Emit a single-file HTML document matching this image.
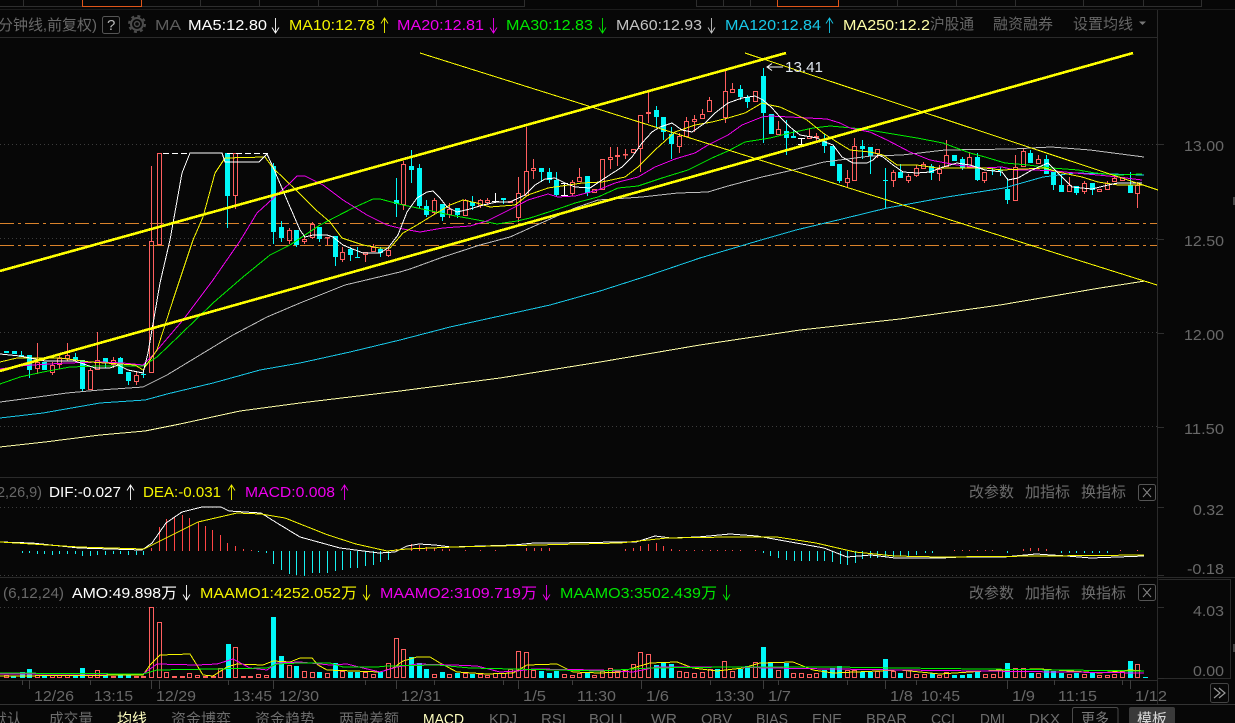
<!DOCTYPE html>
<html><head><meta charset="utf-8"><style>
html,body{margin:0;padding:0;background:#070707;width:1235px;height:723px;overflow:hidden}
svg{display:block}
text{font-family:"Liberation Sans","Noto Sans CJK SC",sans-serif;font-size:15px}
.g{fill:#686868}
.ln{fill:none;stroke-width:1}
polyline{shape-rendering:crispEdges}
</style></head><body>
<svg width="1235" height="723" viewBox="0 0 1235 723" xmlns="http://www.w3.org/2000/svg">
<rect width="1235" height="723" fill="#070707"/>
<!-- top tabs -->
<g fill="none" stroke="#2e2e2e" shape-rendering="crispEdges">
<path d="M0 6.5H524.5V0M23.5 0V6M82.5 0V6M141.5 0V6M200.5 0V6M259.5 0V6M318.5 0V6M377.5 0V6M436.5 0V6"/>
<path d="M696.5 0V6.5H1201.5V0M723.5 0V6M750.5 0V6M897.5 0V6M956.5 0V6M1015.5 0V6M1083.5 0V6M1143.5 0V6"/>
<path d="M0 9.5H1235" stroke="#1c1c1c"/>
<path d="M0 37.5H1157" stroke="#2a2a2a"/>
<path d="M1157.5 10V704" stroke="#2a2a2a"/>
<path d="M0 477.5H1157M0 577.5H1235M0 680.5H1157" stroke="#2a2a2a"/>
<path d="M0 704.5H1235" stroke="#333"/>
<path d="M1158.5 579.5H1230.5V678.5H1158.5" stroke="#2a2a2a"/>
</g>
<rect x="1233" y="197" width="2" height="8" fill="#444"/>
<rect x="1233" y="644" width="2" height="8" fill="#444"/>
<path d="M82.5 0V6.5H141.5V0M777.5 0V6.5H838.5V0" fill="none" stroke="#e0561a" shape-rendering="crispEdges"/>
<!-- grid -->
<g fill="none" stroke="#3c3c3c" stroke-dasharray="1 3" shape-rendering="crispEdges">
<path d="M0 144.5H1157M0 238.5H1157M0 332.5H1157M0 426.5H1157M0 507.5H1145M0 575.5H1145M0 607.5H1145"/>
</g>
<path d="M0 223.5H1157M0 245.5H1157" fill="none" stroke="#d9822b" stroke-dasharray="14 4 3 4" shape-rendering="crispEdges"/>
<!-- candles: red hollow -->
<g fill="none" stroke="#ff5f5f" shape-rendering="crispEdges">
<path d="M35.5 362.5h4V368.5h-4zM50.5 365.5h4V372.5h-4zM57.5 358.5h4V364.5h-4zM65.5 355.5h4V358.5h-4zM88.5 370.5h4V389.5h-4zM95.5 360.5h4V369.5h-4zM111.5 360.5h4V364.5h-4zM134.5 375.5h4V381.5h-4zM149.5 241.5h4V372.5h-4zM157.5 153.5h4V244.5h-4zM233.5 153.5h4V195.5h-4zM287.5 230.5h4V240.5h-4zM302.5 239.5h4V241.5h-4zM310.5 224.5h4V237.5h-4zM325.5 237.5h4V238h-4zM340.5 252.5h4V259.5h-4zM363.5 252.5h4V254.5h-4zM371.5 247.5h4V251.5h-4zM386.5 250.5h4V255.5h-4zM401.5 164.5h4V204.5h-4zM432.5 200.5h4V212.5h-4zM447.5 209.5h4V214.5h-4zM463.5 200.5h4V215.5h-4zM478.5 200.5h4V205.5h-4zM485.5 200.5h4V202.5h-4zM508.5 201.5h4V202.5h-4zM516.5 193.5h4V217.5h-4zM524.5 171.5h4V195.5h-4zM531.5 168.5h4V170.5h-4zM570.5 182.5h4V193.5h-4zM577.5 177.5h4V181.5h-4zM592.5 189.5h4V192.5h-4zM600.5 159.5h4V189.5h-4zM608.5 157.5h4V159.5h-4zM615.5 155.5h4V156.5h-4zM623.5 154.5h4V155h-4zM631.5 149.5h4V152.5h-4zM638.5 115.5h4V148.5h-4zM646.5 112.5h4V113.5h-4zM677.5 136.5h4V146.5h-4zM684.5 121.5h4V136.5h-4zM692.5 119.5h4V121.5h-4zM700.5 114.5h4V118.5h-4zM707.5 100.5h4V111.5h-4zM723.5 91.5h4V117.5h-4zM730.5 89.5h4V92.5h-4zM753.5 91.5h4V101.5h-4zM776.5 129.5h4V134.5h-4zM807.5 136.5h4V138.5h-4zM814.5 136.5h4V137.5h-4zM845.5 178.5h4V182.5h-4zM852.5 146.5h4V180.5h-4zM875.5 149.5h4V153.5h-4zM891.5 172.5h4V180.5h-4zM906.5 176.5h4V180.5h-4zM914.5 168.5h4V175.5h-4zM921.5 164.5h4V168.5h-4zM937.5 169.5h4V173.5h-4zM944.5 155.5h4V166.5h-4zM967.5 157.5h4V167.5h-4zM982.5 172.5h4V180.5h-4zM1013.5 167.5h4V200.5h-4zM1021.5 151.5h4V166.5h-4zM1036.5 159.5h4V163.5h-4zM1067.5 185.5h4V191.5h-4zM1082.5 183.5h4V191.5h-4zM1097.5 189.5h4V191.5h-4zM1105.5 183.5h4V189.5h-4zM1112.5 178.5h4V181.5h-4zM1120.5 177.5h4V180.5h-4zM1135.5 185.5h4V193.5h-4z"/>
<path d="M37.5 343V362M37.5 369V374M52.5 362V365M52.5 373V375M59.5 353V358M59.5 365V369M67.5 343V355M67.5 359V361M90.5 368V370M97.5 332V360M113.5 357V360M113.5 365V368M136.5 372V375M136.5 382V385M151.5 166V241M235.5 196V209M289.5 228V230M289.5 241V244M304.5 237V239M304.5 242V244M312.5 222V224M312.5 238V239M327.5 238V245M342.5 247V252M342.5 260V262M365.5 255V262M373.5 244V247M388.5 248V250M388.5 256V257M403.5 161V164M403.5 205V210M434.5 198V200M434.5 213V215M449.5 203V209M449.5 215V218M465.5 199V200M480.5 199V200M480.5 206V208M487.5 198V200M487.5 203V205M518.5 177V193M518.5 218V222M526.5 127V171M533.5 159V168M533.5 171V179M572.5 180V182M572.5 194V196M579.5 168V177M610.5 147V157M610.5 160V169M617.5 147V155M617.5 157V166M625.5 149V159M640.5 149V172M648.5 92V112M648.5 114V123M679.5 133V136M679.5 147V153M686.5 117V121M694.5 115V119M694.5 122V132M702.5 109V114M709.5 97V100M725.5 70V91M725.5 118V123M732.5 83V89M778.5 121V129M809.5 128V136M816.5 133V136M816.5 138V142M847.5 170V178M847.5 183V188M854.5 138V146M877.5 154V158M893.5 170V172M893.5 181V187M908.5 174V176M908.5 181V183M916.5 165V168M916.5 176V177M923.5 162V164M939.5 165V169M939.5 174V181M946.5 140V155M969.5 152V157M984.5 181V183M1015.5 155V167M1023.5 149V151M1038.5 155V159M1069.5 177V185M1084.5 181V183M1084.5 192V194M1107.5 181V183M1114.5 176V178M1137.5 182V185M1137.5 194V208"/>
</g>
<!-- candles: cyan -->
<g shape-rendering="crispEdges">
<path fill="#00f8f8" d="M4 351h5v2h-5zM12 351h5v3h-5zM19 355h5v2h-5zM27 355h5v15h-5zM42 362h5v8h-5zM73 357h5v3h-5zM80 360h5v29h-5zM103 358h5v4h-5zM118 358h5v16h-5zM126 372h5v9h-5zM141 374h5v1h-5zM225 153h5v43h-5zM271 166h5v66h-5zM279 227h5v11h-5zM294 230h5v15h-5zM317 227h5v12h-5zM333 236h5v21h-5zM348 249h5v6h-5zM355 257h5v1h-5zM378 249h5v4h-5zM394 200h5v4h-5zM409 166h5v4h-5zM417 168h5v38h-5zM424 206h5v9h-5zM440 204h5v13h-5zM455 208h5v7h-5zM470 202h5v4h-5zM501 198h5v2h-5zM539 168h5v4h-5zM547 172h5v8h-5zM554 180h5v15h-5zM585 176h5v17h-5zM654 110h5v7h-5zM661 117h5v15h-5zM669 134h5v10h-5zM738 89h5v8h-5zM745 97h5v5h-5zM761 76h5v37h-5zM769 114h5v20h-5zM784 131h5v7h-5zM791 136h5v2h-5zM822 141h5v5h-5zM830 146h5v20h-5zM837 164h5v17h-5zM860 146h5v3h-5zM868 147h5v9h-5zM883 180h5v1h-5zM898 172h5v6h-5zM929 166h5v7h-5zM952 155h5v6h-5zM960 159h5v9h-5zM975 157h5v23h-5zM990 170h5v1h-5zM998 170h5v1h-5zM1005 189h5v11h-5zM1028 153h5v10h-5zM1044 159h5v15h-5zM1051 172h5v13h-5zM1059 185h5v7h-5zM1074 186h5v7h-5zM1090 183h5v7h-5zM1128 185h5v8h-5z"/>
<path fill="none" stroke="#00f8f8" d="M21.5 351V357M29.5 370V378M75.5 353V357M82.5 389V392M105.5 362V368M120.5 357V358M128.5 381V385M143.5 371V378M227.5 196V228M273.5 163V244M281.5 221V242M296.5 245V247M319.5 239V242M335.5 257V266M350.5 247V261M357.5 247V258M380.5 247V257M396.5 178V217M411.5 150V183M419.5 164V208M426.5 200V217M442.5 217V221M457.5 215V218M472.5 196V210M503.5 200V204M541.5 172V182M549.5 168V183M556.5 172V196M587.5 193V196M656.5 106V128M663.5 132V140M671.5 127V159M740.5 85V100M747.5 95V108M763.5 68V143M786.5 120V155M793.5 130V136M824.5 134V153M839.5 181V183M862.5 140V159M870.5 156V174M885.5 168V208M900.5 164V172M931.5 164V180M962.5 157V170M977.5 153V181M992.5 167V175M1000.5 167V176M1007.5 178V204M1030.5 150V153M1046.5 155V159M1053.5 185V190M1061.5 175V185M1076.5 193V195M1092.5 190V195M1130.5 172V185"/>
<path fill="none" stroke="#fff" d="M495.5 193V202M492 201.5H499M564.5 183V196M561 183.5H568M561 195.5H568M801.5 138V145M798 138.5H805M798 144.5H805"/>
<path fill="none" stroke="#fff" stroke-dasharray="6 3" d="M163 153.5H190M227 153.5H268"/>
</g>
<!-- moving averages -->
<g class="ln">
<polyline stroke="#bdbdbd" fill="none" points="0,402 23,399 67,393 100,390 143,387 167,375 200,355 233,335 267,317 300,303 345,285 400,272 410,269 443,257 480,245 510,237 530,228 575,208 598,200 642,197 678,193 708,192 728,186 762,177 793,170 824,162 871,156 902,155 945,150 1012,149 1051,147 1090,150 1144,157"/>
<polyline stroke="#18c8e8" fill="none" points="0,418 43,413 100,403 145,400 167,394 213,383 260,370 300,363 350,352 400,340 450,327 500,316 550,305 600,291 650,275 700,258 761,240 796,230 842,219 887,208 947,197 1004,188 1043,177 1075,173 1144,175"/>
<polyline stroke="#ffffa8" fill="none" points="0,447 45,442 100,435 145,431 180,424 240,411 300,403 400,391 500,378 600,362 700,345 800,330 900,319 1000,305 1100,288 1145,281"/>
<polyline stroke="#00ee00" fill="none" points="0,384 20,377 43,372 70,367 100,366 143,366 157,357 180,335 213,303 243,277 270,255 290,245 320,225 353,208 373,199 380,199 403,205 427,210 450,215 467,218 483,221 497,224 517,221 530,218 558,209 575,203 598,197 618,188 638,186 662,178 688,170 712,158 728,151 745,142 770,138 790,133 813,128 830,126 863,129 887,133 917,138 943,143 970,153 985,157 1005,163 1028,165 1052,168 1078,170 1095,173 1118,175 1142,174"/>
<polyline stroke="#ee00ee" fill="none" points="0,369 20,366 33,365 67,363 100,362 123,363 143,365 153,355 183,320 213,280 240,241 257,213 290,183 297,176 305,176 323,185 343,200 367,215 387,225 403,229 420,232 443,228 470,226 487,221 503,213 515,207 528,200 548,194 558,197 575,196 598,190 615,183 638,177 655,167 675,159 695,153 708,145 728,135 742,125 762,117 770,116 790,117 827,119 840,123 850,128 870,132 887,140 910,152 930,160 957,165 983,168 1002,167 1015,170 1035,170 1055,171 1075,173 1098,175 1118,177 1142,180"/>
<polyline stroke="#f5f500" fill="none" points="0,362 17,358 60,358 90,362 135,365 143,370 157,350 173,300 193,240 203,217 215,173 225,158 265,157 273,168 296,190 316,210 330,222 342,238 363,245 380,248 390,248 403,233 417,225 430,217 450,205 463,200 477,203 490,207 515,205 528,195 548,188 582,183 602,182 625,177 638,167 655,150 675,132 695,125 712,122 728,118 745,113 762,103 770,105 780,107 793,113 807,120 823,133 837,142 850,150 870,152 883,155 897,165 917,165 937,168 957,168 985,168 1002,170 1045,168 1058,172 1082,177 1098,182 1118,185 1142,185"/>
<polyline stroke="#ffffff" fill="none" points="0,354 20,356 30,358 45,361 60,361 75,361 95,368 110,368 118,365 128,370 143,373 148,353 160,283 170,240 182,173 190,153 222,153 225,162 259,162 267,154 273,167 287,200 300,230 305,237 313,235 327,235 333,237 343,245 350,248 363,253 380,253 388,248 398,235 407,212 417,198 427,192 433,191 440,198 447,207 457,212 470,209 483,205 497,202 510,202 525,195 535,185 545,179 555,178 565,183 575,187 590,188 605,178 622,167 632,157 642,143 652,132 660,127 672,123 682,130 692,132 705,123 715,113 728,103 742,98 755,96 763,100 772,108 780,117 790,127 800,135 817,138 825,142 833,145 842,157 853,163 867,163 873,160 878,155 883,157 893,165 903,172 917,173 930,172 943,167 957,163 970,165 985,170 1002,172 1008,180 1018,178 1032,170 1048,163 1058,173 1072,187 1092,189 1108,185 1118,183 1142,183"/>
<path stroke="#ffff00" fill="none" shape-rendering="crispEdges" d="M420 53L1157 285M745 53L1158 190"/>
<path stroke="#ffff00" stroke-width="2.6" fill="none" shape-rendering="crispEdges" d="M0 271L786 53M0 371L1133 53"/>
</g>
<path d="M783 67H767M772 63.5L767 67L772 70.5" fill="none" stroke="#fff"/>
<text x="785" y="72" textLength="38" lengthAdjust="spacingAndGlyphs" fill="#dfe6ee">13.41</text>
<!-- MACD -->
<g fill="none" shape-rendering="crispEdges">
<path stroke="#ff4545" d="M151.5 548V551M159.5 527V551M166.5 519V551M174.5 517V551M182.5 515V551M189.5 518V551M198.5 522V551M205.5 526V551M212.5 530V551M220.5 535V551M227.5 543V551M235.5 546V551M243.5 549V551M251.5 550V551M396.5 549V551M411.5 544V551M419.5 545V551M426.5 547V551M434.5 548V551M442.5 549V551M449.5 549V551M465.5 550V551M480.5 550V551M495.5 550V551M526.5 548V551M534.5 548V551M541.5 548V551M549.5 548V551M625.5 549V551M633.5 548V551M640.5 546V551M648.5 544V551M656.5 543V551M663.5 546V551M671.5 549V551M679.5 550V551M686.5 550V551M694.5 550V551M702.5 550V551M710.5 550V551M717.5 550V551M725.5 550V551M732.5 550V551M740.5 550V551M755.5 550V551M954.5 550V551M962.5 550V551M969.5 550V551M977.5 550V551M985.5 550V551M992.5 550V551M1023.5 549V551M1030.5 548V551M1038.5 548V551M1046.5 549V551M1120.5 550V551M1137.5 550V551"/>
<path stroke="#18f0f0" d="M22.5 551V553M29.5 551V553M37.5 551V554M44.5 551V554M52.5 551V555M59.5 551V554M67.5 551V554M75.5 551V554M82.5 551V556M90.5 551V556M97.5 551V555M105.5 551V555M113.5 551V554M120.5 551V554M128.5 551V555M136.5 551V555M143.5 551V555M258.5 551V552M266.5 551V553M273.5 551V564M281.5 551V570M289.5 551V574M296.5 551V575M304.5 551V576M312.5 551V573M319.5 551V573M327.5 551V573M335.5 551V571M342.5 551V570M350.5 551V568M357.5 551V568M365.5 551V566M373.5 551V565M380.5 551V562M388.5 551V560M763.5 551V553M770.5 551V556M778.5 551V558M786.5 551V560M794.5 551V561M801.5 551V561M809.5 551V561M817.5 551V561M824.5 551V561M832.5 551V562M840.5 551V564M847.5 551V565M855.5 551V563M862.5 551V559M870.5 551V558M877.5 551V558M885.5 551V557M893.5 551V557M900.5 551V556M908.5 551V556M916.5 551V555M925.5 551V553M932.5 551V553M1007.5 551V553M1061.5 551V553M1069.5 551V553M1076.5 551V553M1084.5 551V553M1092.5 551V553M1099.5 551V553M1107.5 551V553"/>
</g>
<polyline fill="none" stroke="#ffffff" points="0,542 32,543 79,548 142,550 152,543 166,523 182,512 202,507 221,507 229,511 261,513 277,523 300,537 340,548 379,553 395,552 407,546 419,544 435,545 451,547 514,545 534,543 553,543 620,542 636,542 655,536 671,538 698,537 730,534 757,536 785,541 824,548 847,557 871,555 895,558 941,558 961,557 1004,557 1036,554 1067,556 1091,558 1144,556"/>
<polyline fill="none" stroke="#f5f500" points="0,542 79,547 144,549 166,538 198,522 237,513 261,514 285,518 328,535 356,544 387,551 407,549 455,547 620,543 667,538 730,537 777,537 816,543 855,552 895,556 941,557 1144,555"/>
<!-- Volume -->
<g shape-rendering="crispEdges">
<path fill="#00f8f8" d="M11 676h5V678h-5zM20 672h5V678h-5zM27 669h5V678h-5zM42 675h5V678h-5zM73 675h5V678h-5zM80 668h5V678h-5zM103 675h5V678h-5zM118 674h5V678h-5zM126 675h5V678h-5zM226 644h5V678h-5zM271 617h5V678h-5zM279 656h5V678h-5zM294 666h5V678h-5zM317 672h5V678h-5zM333 663h5V678h-5zM348 672h5V678h-5zM355 672h5V678h-5zM378 672h5V678h-5zM409 657h5V678h-5zM417 663h5V678h-5zM424 669h5V678h-5zM440 672h5V678h-5zM455 673h5V678h-5zM470 674h5V678h-5zM539 671h5V678h-5zM547 673h5V678h-5zM554 671h5V678h-5zM585 672h5V678h-5zM654 665h5V678h-5zM661 663h5V678h-5zM669 664h5V678h-5zM715 669h5V678h-5zM738 669h5V678h-5zM745 666h5V678h-5zM761 647h5V678h-5zM768 663h5V678h-5zM784 663h5V678h-5zM822 670h5V678h-5zM830 668h5V678h-5zM837 666h5V678h-5zM860 672h5V678h-5zM868 672h5V678h-5zM883 659h5V678h-5zM898 673h5V678h-5zM930 673h5V678h-5zM952 675h5V678h-5zM960 675h5V678h-5zM967 674h5V678h-5zM975 672h5V678h-5zM1005 663h5V678h-5zM1029 673h5V678h-5zM1044 670h5V678h-5zM1051 671h5V678h-5zM1059 673h5V678h-5zM1074 673h5V678h-5zM1090 673h5V678h-5zM1128 661h5V678h-5zM1143 677h5V678h-5z"/>
<path fill="none" stroke="#ff5f5f" d="M4.5 675.5h4V677.5h-4zM35.5 675.5h4V677.5h-4zM50.5 675.5h4V677.5h-4zM57.5 675.5h4V677.5h-4zM65.5 675.5h4V677.5h-4zM88.5 675.5h4V677.5h-4zM95.5 670.5h4V677.5h-4zM111.5 676.5h4V677.5h-4zM134.5 676.5h4V677.5h-4zM141.5 676.5h4V677.5h-4zM149.5 607.5h4V677.5h-4zM157.5 622.5h4V677.5h-4zM164.5 672.5h4V677.5h-4zM172.5 676.5h4V677.5h-4zM180.5 676.5h4V677.5h-4zM187.5 673.5h4V677.5h-4zM195.5 675.5h4V677.5h-4zM203.5 676.5h4V677.5h-4zM211.5 676.5h4V677.5h-4zM218.5 668.5h4V677.5h-4zM233.5 647.5h4V677.5h-4zM241.5 676.5h4V677.5h-4zM248.5 676.5h4V677.5h-4zM256.5 674.5h4V677.5h-4zM264.5 675.5h4V677.5h-4zM287.5 665.5h4V677.5h-4zM302.5 671.5h4V677.5h-4zM310.5 672.5h4V677.5h-4zM325.5 673.5h4V677.5h-4zM340.5 671.5h4V677.5h-4zM363.5 672.5h4V677.5h-4zM371.5 674.5h4V677.5h-4zM386.5 663.5h4V677.5h-4zM394.5 638.5h4V677.5h-4zM401.5 649.5h4V677.5h-4zM432.5 674.5h4V677.5h-4zM447.5 674.5h4V677.5h-4zM463.5 673.5h4V677.5h-4zM478.5 674.5h4V677.5h-4zM485.5 675.5h4V677.5h-4zM493.5 673.5h4V677.5h-4zM501.5 673.5h4V677.5h-4zM508.5 669.5h4V677.5h-4zM516.5 651.5h4V677.5h-4zM524.5 652.5h4V677.5h-4zM531.5 670.5h4V677.5h-4zM562.5 674.5h4V677.5h-4zM570.5 675.5h4V677.5h-4zM577.5 673.5h4V677.5h-4zM592.5 675.5h4V677.5h-4zM600.5 671.5h4V677.5h-4zM608.5 668.5h4V677.5h-4zM615.5 672.5h4V677.5h-4zM623.5 669.5h4V677.5h-4zM631.5 664.5h4V677.5h-4zM638.5 652.5h4V677.5h-4zM646.5 654.5h4V677.5h-4zM677.5 671.5h4V677.5h-4zM684.5 672.5h4V677.5h-4zM692.5 673.5h4V677.5h-4zM700.5 672.5h4V677.5h-4zM708.5 669.5h4V677.5h-4zM722.5 661.5h4V677.5h-4zM730.5 671.5h4V677.5h-4zM753.5 662.5h4V677.5h-4zM776.5 670.5h4V677.5h-4zM791.5 673.5h4V677.5h-4zM799.5 673.5h4V677.5h-4zM807.5 674.5h4V677.5h-4zM814.5 673.5h4V677.5h-4zM845.5 670.5h4V677.5h-4zM852.5 670.5h4V677.5h-4zM875.5 671.5h4V677.5h-4zM891.5 671.5h4V677.5h-4zM906.5 670.5h4V677.5h-4zM914.5 674.5h4V677.5h-4zM922.5 674.5h4V677.5h-4zM937.5 675.5h4V677.5h-4zM944.5 672.5h4V677.5h-4zM983.5 674.5h4V677.5h-4zM991.5 674.5h4V677.5h-4zM998.5 669.5h4V677.5h-4zM1013.5 668.5h4V677.5h-4zM1021.5 668.5h4V677.5h-4zM1036.5 673.5h4V677.5h-4zM1067.5 674.5h4V677.5h-4zM1082.5 674.5h4V677.5h-4zM1097.5 675.5h4V677.5h-4zM1105.5 675.5h4V677.5h-4zM1112.5 674.5h4V677.5h-4zM1120.5 671.5h4V677.5h-4zM1135.5 664.5h4V677.5h-4z"/>
</g>
<polyline fill="none" stroke="#f5f500" points="0,676 143,675 150,665 160,655 190,654 203,675 213,676 227,667 237,664 263,665 273,661 290,662 300,658 312,658 318,665 327,670 380,672 393,668 403,661 417,657 430,657 440,663 457,672 487,674 513,673 527,665 557,664 573,672 600,673 620,672 633,668 650,663 677,662 693,668 717,671 743,668 760,663 793,662 813,670 833,673 900,670 940,674 1000,670 1040,669 1100,673 1130,670 1144,671"/>
<polyline fill="none" stroke="#ee00ee" points="0,674 143,674 157,664 197,665 217,664 233,659 250,668 267,670 277,663 300,662 330,665 347,664 363,668 380,672 397,667 417,664 453,665 477,666 500,672 517,671 533,669 600,670 633,672 657,667 733,667 767,668 900,670 1144,673"/>
<polyline fill="none" stroke="#00f000" points="0,673 143,674 157,670 213,669 267,668 277,664 300,663 330,663 343,667 377,667 387,666 437,665 470,668 600,671 650,668 733,667 833,667 900,668 1144,671"/>
<!-- x-axis ticks -->
<path fill="none" stroke="#3d3d3d" shape-rendering="crispEdges" d="M29.5 680V689M151.5 680V689M159.5 680V689M273.5 680V689M396.5 680V689M518.5 680V689M641.5 680V689M763.5 680V689M885.5 680V689M1007.5 680V689M1130.5 680V689M22.5 680V685M90.5 680V685M228.5 680V685M365.5 680V685M434.5 680V685M503.5 680V685M572.5 680V685M710.5 680V685M778.5 680V685M847.5 680V685M916.5 680V685M1054.5 680V685M1122.5 680V685"/>
<path fill="none" stroke="#2e2e2e" shape-rendering="crispEdges" d="M1157 144.5H1164M1157 239.5H1164M1157 333.5H1164M1157 427.5H1164M1157 507.5H1164M1157 575.5H1164M1158 607.5H1164M1158 678.5H1164"/>
<!-- header -->
<text x="-2" y="30" textLength="99" lengthAdjust="spacingAndGlyphs" class="g">分钟线,前复权)</text>
<rect x="102.5" y="16.5" width="17" height="17" rx="2" fill="none" stroke="#555"/>
<text x="107" y="30" font-size="14" fill="#bbb">?</text>
<circle cx="137" cy="24" r="6" fill="none" stroke="#4c4c4c" stroke-width="2"/>
<circle cx="137" cy="24" r="8" fill="none" stroke="#4c4c4c" stroke-width="2" stroke-dasharray="3 3.3"/>
<circle cx="137" cy="24" r="2.5" fill="none" stroke="#4c4c4c" stroke-width="1.4"/>
<text x="155" y="30" textLength="26" lengthAdjust="spacingAndGlyphs" fill="#5e5e5e">MA</text>
<text x="188" y="30" textLength="79" lengthAdjust="spacingAndGlyphs" fill="#fff">MA5:12.80</text>
<text x="289" y="30" textLength="86" lengthAdjust="spacingAndGlyphs" fill="#f5f500">MA10:12.78</text>
<text x="397" y="30" textLength="87" lengthAdjust="spacingAndGlyphs" fill="#ee00ee">MA20:12.81</text>
<text x="506" y="30" textLength="87" lengthAdjust="spacingAndGlyphs" fill="#00e800">MA30:12.83</text>
<text x="616" y="30" textLength="86" lengthAdjust="spacingAndGlyphs" fill="#c4c4c4">MA60:12.93</text>
<text x="725" y="30" textLength="96" lengthAdjust="spacingAndGlyphs" fill="#18c8e8">MA120:12.84</text>
<text x="843" y="30" textLength="87" lengthAdjust="spacingAndGlyphs" fill="#ffffa8">MA250:12.2</text>
<text x="930" y="29" textLength="44" lengthAdjust="spacingAndGlyphs" fill="#666">沪股通</text>
<text x="993" y="29" textLength="60" lengthAdjust="spacingAndGlyphs" fill="#666">融资融券</text>
<text x="1073" y="29" textLength="60" lengthAdjust="spacingAndGlyphs" fill="#666">设置均线</text>
<path d="M1139 21.5h7l-3.5 3.5z" fill="#777"/>
<g fill="none" stroke-width="0.9">
<path stroke="#fff" d="M275.5 18V33M272 27.5L275.5 33L279 27.5"/>
<path stroke="#f5f500" d="M384.5 18V33M381 23.5L384.5 18L388 23.5"/>
<path stroke="#ee00ee" d="M493.5 18V33M490 27.5L493.5 33L497 27.5"/>
<path stroke="#00e800" d="M602.5 18V33M599 27.5L602.5 33L606 27.5"/>
<path stroke="#c4c4c4" d="M711.5 18V33M708 27.5L711.5 33L715 27.5"/>
<path stroke="#18c8e8" d="M829.5 18V33M826 23.5L829.5 18L833 23.5"/>
</g>
<!-- right axis -->
<text x="1184" y="151" textLength="40" lengthAdjust="spacingAndGlyphs" class="g">13.00</text>
<text x="1184" y="246" textLength="40" lengthAdjust="spacingAndGlyphs" class="g">12.50</text>
<text x="1184" y="340" textLength="40" lengthAdjust="spacingAndGlyphs" class="g">12.00</text>
<text x="1184" y="434" textLength="40" lengthAdjust="spacingAndGlyphs" class="g">11.50</text>
<text x="1193" y="515" textLength="31" lengthAdjust="spacingAndGlyphs" class="g">0.32</text>
<text x="1187" y="574" textLength="37" lengthAdjust="spacingAndGlyphs" class="g">-0.18</text>
<text x="1193" y="616" textLength="31" lengthAdjust="spacingAndGlyphs" class="g">4.03</text>
<text x="1193" y="676" textLength="31" lengthAdjust="spacingAndGlyphs" class="g">0.00</text>
<!-- MACD header -->
<text x="-3" y="497" textLength="45" lengthAdjust="spacingAndGlyphs" class="g">2,26,9)</text>
<text x="49" y="497" textLength="72" lengthAdjust="spacingAndGlyphs" fill="#fff">DIF:-0.027</text>
<text x="143" y="497" textLength="78" lengthAdjust="spacingAndGlyphs" fill="#f5f500">DEA:-0.031</text>
<text x="245" y="497" textLength="90" lengthAdjust="spacingAndGlyphs" fill="#ee00ee">MACD:0.008</text>
<g fill="none" stroke-width="0.9">
<path stroke="#fff" d="M130.5 485V500M127 490.5L130.5 485L134 490.5"/>
<path stroke="#f5f500" d="M231.5 485V500M228 490.5L231.5 485L235 490.5"/>
<path stroke="#ee00ee" d="M344.5 485V500M341 490.5L344.5 485L348 490.5"/>
</g>
<text x="969" y="497" textLength="45" lengthAdjust="spacingAndGlyphs" fill="#6e6e6e">改参数</text>
<text x="1025" y="497" textLength="45" lengthAdjust="spacingAndGlyphs" fill="#6e6e6e">加指标</text>
<text x="1081" y="497" textLength="45" lengthAdjust="spacingAndGlyphs" fill="#6e6e6e">换指标</text>
<rect x="1138.5" y="484.5" width="17" height="16" rx="2" fill="none" stroke="#555"/>
<path d="M1143 488L1151 497M1151 488L1143 497" stroke="#888" fill="none"/>
<!-- AMO header -->
<text x="3" y="598" textLength="61" lengthAdjust="spacingAndGlyphs" class="g">(6,12,24)</text>
<text x="72" y="598" textLength="105" lengthAdjust="spacingAndGlyphs" fill="#fff">AMO:49.898万</text>
<text x="200" y="598" textLength="157" lengthAdjust="spacingAndGlyphs" fill="#f5f500">MAAMO1:4252.052万</text>
<text x="380" y="598" textLength="157" lengthAdjust="spacingAndGlyphs" fill="#ee00ee">MAAMO2:3109.719万</text>
<text x="560" y="598" textLength="157" lengthAdjust="spacingAndGlyphs" fill="#00e800">MAAMO3:3502.439万</text>
<g fill="none" stroke-width="0.9">
<path stroke="#fff" d="M186.5 585V600M183 594.5L186.5 600L190 594.5"/>
<path stroke="#f5f500" d="M366.5 585V600M363 594.5L366.5 600L370 594.5"/>
<path stroke="#ee00ee" d="M546.5 585V600M543 594.5L546.5 600L550 594.5"/>
<path stroke="#00e800" d="M726.5 585V600M723 594.5L726.5 600L730 594.5"/>
</g>
<text x="969" y="598" textLength="45" lengthAdjust="spacingAndGlyphs" fill="#6e6e6e">改参数</text>
<text x="1025" y="598" textLength="45" lengthAdjust="spacingAndGlyphs" fill="#6e6e6e">加指标</text>
<text x="1081" y="598" textLength="45" lengthAdjust="spacingAndGlyphs" fill="#6e6e6e">换指标</text>
<rect x="1138.5" y="584.5" width="17" height="16" rx="2" fill="none" stroke="#555"/>
<path d="M1143 588L1151 597M1151 588L1143 597" stroke="#888" fill="none"/>
<!-- x labels -->
<g class="g">
<text x="34" y="701" textLength="40" lengthAdjust="spacingAndGlyphs">12/26</text>
<text x="94" y="701" textLength="39" lengthAdjust="spacingAndGlyphs">13:15</text>
<text x="156" y="701" textLength="40" lengthAdjust="spacingAndGlyphs">12/29</text>
<text x="233" y="701" textLength="39" lengthAdjust="spacingAndGlyphs">13:45</text>
<text x="279" y="701" textLength="40" lengthAdjust="spacingAndGlyphs">12/30</text>
<text x="401" y="701" textLength="40" lengthAdjust="spacingAndGlyphs">12/31</text>
<text x="523" y="701" textLength="23" lengthAdjust="spacingAndGlyphs">1/5</text>
<text x="577" y="701" textLength="39" lengthAdjust="spacingAndGlyphs">11:30</text>
<text x="646" y="701" textLength="23" lengthAdjust="spacingAndGlyphs">1/6</text>
<text x="715" y="701" textLength="39" lengthAdjust="spacingAndGlyphs">13:30</text>
<text x="768" y="701" textLength="23" lengthAdjust="spacingAndGlyphs">1/7</text>
<text x="890" y="701" textLength="23" lengthAdjust="spacingAndGlyphs">1/8</text>
<text x="921" y="701" textLength="39" lengthAdjust="spacingAndGlyphs">10:45</text>
<text x="1012" y="701" textLength="23" lengthAdjust="spacingAndGlyphs">1/9</text>
<text x="1058" y="701" textLength="39" lengthAdjust="spacingAndGlyphs">11:15</text>
<text x="1135" y="701" textLength="32" lengthAdjust="spacingAndGlyphs">1/12</text>
</g>
<rect x="1210.5" y="683.5" width="18" height="19" rx="2" fill="none" stroke="#444"/>
<path d="M1214 688L1220 693L1214 698M1219 688L1225 693L1219 698" fill="none" stroke="#999" stroke-width="1.2"/>
<!-- bottom tabs -->
<g fill="#6c6c6c">
<text x="-8" y="724" textLength="30" lengthAdjust="spacingAndGlyphs">默认</text>
<text x="49" y="724" textLength="44" lengthAdjust="spacingAndGlyphs">成交量</text>
<text x="117" y="724" textLength="30" lengthAdjust="spacingAndGlyphs" fill="#ffffc0">均线</text>
<text x="171" y="724" textLength="60" lengthAdjust="spacingAndGlyphs">资金博弈</text>
<text x="255" y="724" textLength="60" lengthAdjust="spacingAndGlyphs">资金趋势</text>
<text x="339" y="724" textLength="60" lengthAdjust="spacingAndGlyphs">两融差额</text>
<text x="423" y="724" textLength="41" lengthAdjust="spacingAndGlyphs" fill="#ffffc0">MACD</text>
<text x="489" y="724" textLength="28" lengthAdjust="spacingAndGlyphs">KDJ</text>
<text x="541" y="724" textLength="25" lengthAdjust="spacingAndGlyphs">RSI</text>
<text x="589" y="724" textLength="38" lengthAdjust="spacingAndGlyphs">BOLL</text>
<text x="651" y="724" textLength="26" lengthAdjust="spacingAndGlyphs">WR</text>
<text x="701" y="724" textLength="31" lengthAdjust="spacingAndGlyphs">OBV</text>
<text x="756" y="724" textLength="32" lengthAdjust="spacingAndGlyphs">BIAS</text>
<text x="812" y="724" textLength="30" lengthAdjust="spacingAndGlyphs">ENE</text>
<text x="866" y="724" textLength="41" lengthAdjust="spacingAndGlyphs">BRAR</text>
<text x="931" y="724" textLength="24" lengthAdjust="spacingAndGlyphs">CCI</text>
<text x="980" y="724" textLength="25" lengthAdjust="spacingAndGlyphs">DMI</text>
<text x="1029" y="724" textLength="31" lengthAdjust="spacingAndGlyphs">DKX</text>
</g>
<path d="M1072.5 723V709.5q0-2 2-2H1116q2 0 2 2V723" fill="none" stroke="#4a4a4a"/>
<text x="1081" y="724" textLength="28" lengthAdjust="spacingAndGlyphs" fill="#7a7a7a">更多</text>
<path d="M1129 723V709q0-2 2-2H1173q2 0 2 2V723z" fill="#3a3a3a"/>
<text x="1137" y="724" textLength="30" lengthAdjust="spacingAndGlyphs" fill="#d8d8d8">模板</text>
</svg>
</body></html>
